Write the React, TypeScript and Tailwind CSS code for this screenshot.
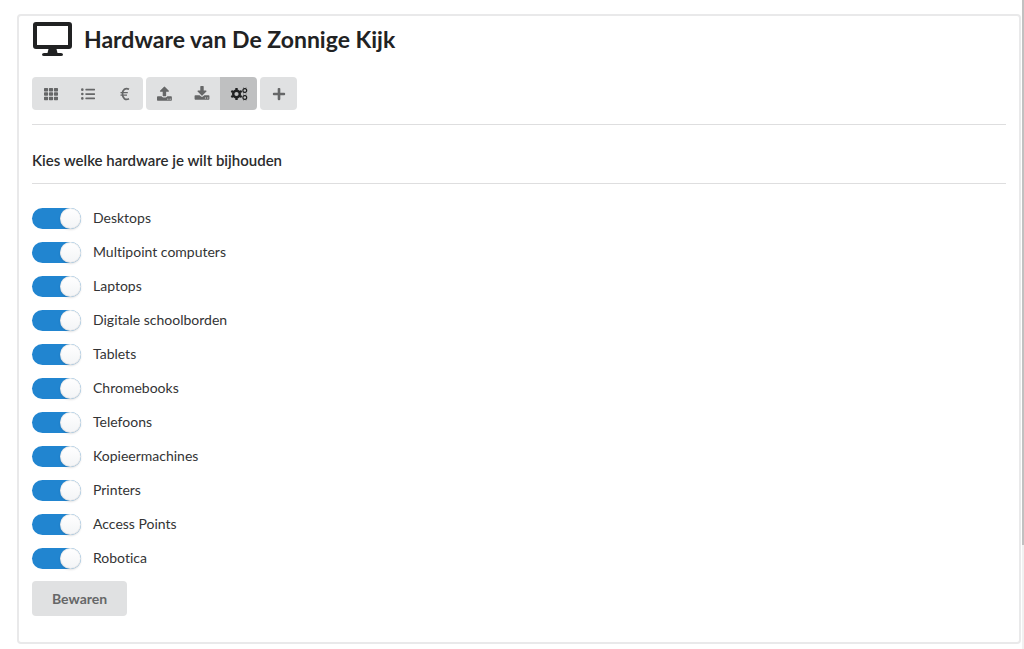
import { useState } from "react";
import type { ReactNode } from "react";
import { FaListUl, FaPlus, FaTh } from "react-icons/fa";

const HARDWARE = [
  "Desktops",
  "Multipoint computers",
  "Laptops",
  "Digitale schoolborden",
  "Tablets",
  "Chromebooks",
  "Telefoons",
  "Kopieermachines",
  "Printers",
  "Access Points",
  "Robotica",
];

function DesktopIcon() {
  return (
    <svg viewBox="0 0 40 36" className="h-9 w-10 shrink-0" fill="currentColor" aria-hidden>
      <path
        fillRule="evenodd"
        d="M4 1h33a3 3 0 0 1 3 3v21a3 3 0 0 1-3 3H24.500l1 4H29q2 0 2 1.500T29 35H12q-2 0-2-1.500t2-1.500h3.500l1-4H4a3 3 0 0 1-3-3V4a3 3 0 0 1 3-3zM5 5v19h31V5z"
      />
    </svg>
  );
}

function EuroIcon() {
  return (
    <svg viewBox="0 0 14 14" className="h-3.5 w-3.5" fill="none" stroke="currentColor" aria-hidden>
      <path strokeWidth="1.7" d="M11 2.2C7.500 .4 4.500 2.600 4.500 7s3 6.600 6.500 4.800" />
      <path strokeWidth="1.3" d="M2.500 5.700h7.300M2.500 8.200h6.500" />
    </svg>
  );
}

function UploadIcon() {
  return (
    <svg viewBox="0 0 1792 1792" className="h-4 w-4" fill="currentColor" aria-hidden>
      <path d="M1280 1472q0-26-19-45t-45-19-45 19-19 45 19 45 45 19 45-19 19-45zm256 0q0-26-19-45t-45-19-45 19-19 45 19 45 45 19 45-19 19-45zm128-224v320q0 40-28 68t-68 28h-1472q-40 0-68-28t-28-68v-320q0-40 28-68t68-28h427q21 56 70.500 92t110.500 36h256q61 0 110.500-36t70.500-92h427q40 0 68 28t28 68zm-325-648q-17 40-59 40h-256v448q0 26-19 45t-45 19h-256q-26 0-45-19t-19-45v-448h-256q-42 0-59-40-17-39 14-69l448-448q18-19 45-19t45 19l448 448q31 30 14 69z" />
    </svg>
  );
}

function DownloadIcon() {
  return (
    <svg viewBox="0 0 1792 1792" className="h-4 w-4" fill="currentColor" aria-hidden>
      <path d="M1344 1344q0-26-19-45t-45-19-45 19-19 45 19 45 45 19 45-19 19-45zm256 0q0-26-19-45t-45-19-45 19-19 45 19 45 45 19 45-19 19-45zm128-224v320q0 40-28 68t-68 28h-1472q-40 0-68-28t-28-68v-320q0-40 28-68t68-28h465l135 136q58 56 136 56t136-56l136-136h464q40 0 68 28t28 68zm-325-569q17 41-14 70l-448 448q-18 19-45 19t-45-19l-448-448q-31-29-14-70 17-39 59-39h256v-448q0-26 19-45t45-19h256q26 0 45 19t19 45v448h256q42 0 59 39z" />
    </svg>
  );
}

// One large gear with two small ones stacked to its right.
function SettingsIcon() {
  return (
    <svg viewBox="0 0 18 16" className="h-4 w-[18px]" fill="none" stroke="currentColor" aria-hidden>
      <circle cx="6.500" cy="8" r="3.300" strokeWidth="2.400" />
      <path
        strokeWidth="2.400"
        d="M6.500 2v2M6.500 12v2M1.300 5l1.700 1M10 10l1.700 1M1.300 11l1.700-1M10 6l1.700-1"
      />
      <g strokeWidth="1.200">
        <circle cx="14.800" cy="4.500" r="1.900" />
        <circle cx="14.800" cy="11.500" r="1.900" />
      </g>
      <path
        strokeWidth="0.800"
        d="M13.600 1.700l.5 1M16 1.700l-.5 1M13.600 7.300l.5-1M16 7.300l-.5-1M13.600 8.700l.5 1M16 8.700l-.5 1M13.600 14.300l.5-1M16 14.300l-.5-1"
      />
    </svg>
  );
}

function ToolButton({
  label,
  active = false,
  children,
}: {
  label: string;
  active?: boolean;
  children: ReactNode;
}) {
  return (
    <button
      type="button"
      aria-label={label}
      aria-pressed={active}
      className={`flex h-[33px] w-[37px] items-center justify-center pt-px text-sm ${
        active ? "bg-[#bfc0c1] text-[#1f2021]" : "bg-[#e0e1e2] text-[#666768] hover:bg-[#cacbcd]"
      }`}
    >
      {children}
    </button>
  );
}

function ButtonGroup({ children }: { children: ReactNode }) {
  return <div className="flex overflow-hidden rounded">{children}</div>;
}

function Toggle({ label }: { label: string }) {
  const [checked, setChecked] = useState(true);

  return (
    <label className="flex h-[34px] cursor-pointer items-center gap-3 text-sm text-[#333435]">
      <input
        type="checkbox"
        role="switch"
        checked={checked}
        onChange={(event) => setChecked(event.target.checked)}
        className="flex h-[21px] w-[49px] shrink-0 cursor-pointer appearance-none items-center justify-start rounded-full bg-gray-200 before:size-[21px] before:rounded-full before:bg-linear-to-b before:from-white before:to-gray-100 before:shadow-[0_1px_2px_rgba(34,36,38,0.15),inset_0_0_0_1px_rgba(34,36,38,0.08)] checked:justify-end checked:bg-[#2185d0]"
      />
      {label}
    </label>
  );
}

export default function App() {
  return (
    <div className="flex min-h-screen bg-white font-['Lato','Liberation_Sans',sans-serif] [font-variant-ligatures:none]">
      <main className="mt-3.5 mr-px mb-[5px] ml-[17px] flex-1 rounded border-2 border-[#e9e9ea] px-[13px] pt-[3px]">
        <h1 className="flex h-10 items-center gap-3 text-[23px] font-bold text-[#212223]">
          <DesktopIcon />
          Hardware van De Zonnige Kijk
        </h1>

        <div className="mt-[18px] flex gap-[3px]" role="toolbar" aria-label="Hardware">
          <ButtonGroup>
            <ToolButton label="Raster">
              <FaTh />
            </ToolButton>
            <ToolButton label="Lijst">
              <FaListUl />
            </ToolButton>
            <ToolButton label="Kosten">
              <EuroIcon />
            </ToolButton>
          </ButtonGroup>
          <ButtonGroup>
            <ToolButton label="Uploaden">
              <UploadIcon />
            </ToolButton>
            <ToolButton label="Downloaden">
              <DownloadIcon />
            </ToolButton>
            <ToolButton label="Instellingen" active>
              <SettingsIcon />
            </ToolButton>
          </ButtonGroup>
          <ButtonGroup>
            <ToolButton label="Toevoegen">
              <FaPlus />
            </ToolButton>
          </ButtonGroup>
        </div>

        <hr className="mt-3.5 border-[#dededf]" />
        <h2 className="mt-[25px] text-[15px] leading-5 font-semibold text-[#2b2c2d]">
          Kies welke hardware je wilt bijhouden
        </h2>
        <hr className="mt-[13px] border-[#dededf]" />

        <form onSubmit={(event) => event.preventDefault()} className="mt-[17px]">
          {HARDWARE.map((name) => (
            <Toggle key={name} label={name} />
          ))}
          <button
            type="submit"
            className="mt-1.5 h-[35px] rounded bg-[#e0e1e2] px-5 text-sm font-bold text-[#666768] hover:bg-[#cacbcd]"
          >
            Bewaren
          </button>
        </form>
      </main>

      <div className="w-0.5 bg-[#f1f1f1]" aria-hidden>
        <div className="h-[84vh] bg-[#c1c1c1]" />
      </div>
    </div>
  );
}
